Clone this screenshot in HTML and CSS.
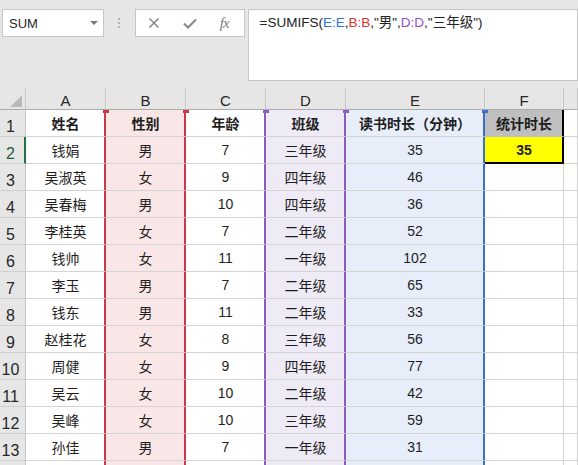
FILE: index.html
```html
<!DOCTYPE html>
<html lang="zh-CN">
<head>
<meta charset="utf-8">
<title>SUMIFS</title>
<link rel="stylesheet" href="styles.css">
</head>
<body>
<div class="topbar">
  <div class="namebox">
    <span class="nb-text">SUM</span>
    <svg class="nb-arrow" width="8" height="4" viewBox="0 0 8 4"><polygon points="0,0 8,0 4,4" fill="#7a7a7a"/></svg>
  </div>
  <div class="grip"><i></i><i></i><i></i></div>
  <div class="fbtns">
    <svg class="ic" width="12" height="12" viewBox="0 0 12 12"><path d="M1.5 1.5 L10.5 10.5 M10.5 1.5 L1.5 10.5" stroke="#8a8a8a" stroke-width="1.6" fill="none"/></svg>
    <svg class="ic" width="14" height="11" viewBox="0 0 14 11"><path d="M1 5.5 L5 9.5 L13 1.5" stroke="#8a8a8a" stroke-width="2.2" fill="none"/></svg>
    <span class="fx">fx</span>
  </div>
  <div class="fbox">=SUMIFS(<span class="rb">E:E</span>,<span class="rr">B:B</span>,"男",<span class="rp">D:D</span>,"三年级")</div>
</div>

<div class="sheet">
  <div class="corner"><svg width="12" height="12" viewBox="0 0 12 12"><polygon points="12,0 12,12 0,12" fill="#b9b9b9"/></svg></div>
  <div class="ch">A</div><div class="ch">B</div><div class="ch">C</div><div class="ch">D</div><div class="ch">E</div><div class="ch">F</div><div class="ch"></div>

  <div class="rh">1</div>
  <div class="c ca hd hr b">姓名</div><div class="c cb hd hr b">性别</div><div class="c cc hd hp b">年龄</div><div class="c cd hd hp b">班级</div><div class="c ce hd hb b">读书时长（分钟）</div><div class="c f1 b">统计时长</div><div class="c"></div>

  <div class="rh sel">2</div>
  <div class="c ca">钱娟</div><div class="c cb">男</div><div class="c cc">7</div><div class="c cd">三年级</div><div class="c ce">35</div><div class="c f2 b">35</div><div class="c"></div>

  <div class="rh">3</div>
  <div class="c ca">吴淑英</div><div class="c cb">女</div><div class="c cc">9</div><div class="c cd">四年级</div><div class="c ce">46</div><div class="c"></div><div class="c"></div>

  <div class="rh">4</div>
  <div class="c ca">吴春梅</div><div class="c cb">男</div><div class="c cc">10</div><div class="c cd">四年级</div><div class="c ce">36</div><div class="c"></div><div class="c"></div>

  <div class="rh">5</div>
  <div class="c ca">李桂英</div><div class="c cb">女</div><div class="c cc">7</div><div class="c cd">二年级</div><div class="c ce">52</div><div class="c"></div><div class="c"></div>

  <div class="rh">6</div>
  <div class="c ca">钱帅</div><div class="c cb">女</div><div class="c cc">11</div><div class="c cd">一年级</div><div class="c ce">102</div><div class="c"></div><div class="c"></div>

  <div class="rh">7</div>
  <div class="c ca">李玉</div><div class="c cb">男</div><div class="c cc">7</div><div class="c cd">二年级</div><div class="c ce">65</div><div class="c"></div><div class="c"></div>

  <div class="rh">8</div>
  <div class="c ca">钱东</div><div class="c cb">男</div><div class="c cc">11</div><div class="c cd">二年级</div><div class="c ce">33</div><div class="c"></div><div class="c"></div>

  <div class="rh">9</div>
  <div class="c ca">赵桂花</div><div class="c cb">女</div><div class="c cc">8</div><div class="c cd">三年级</div><div class="c ce">56</div><div class="c"></div><div class="c"></div>

  <div class="rh">10</div>
  <div class="c ca">周健</div><div class="c cb">女</div><div class="c cc">9</div><div class="c cd">四年级</div><div class="c ce">77</div><div class="c"></div><div class="c"></div>

  <div class="rh">11</div>
  <div class="c ca">吴云</div><div class="c cb">女</div><div class="c cc">10</div><div class="c cd">二年级</div><div class="c ce">42</div><div class="c"></div><div class="c"></div>

  <div class="rh">12</div>
  <div class="c ca">吴峰</div><div class="c cb">女</div><div class="c cc">10</div><div class="c cd">三年级</div><div class="c ce">59</div><div class="c"></div><div class="c"></div>

  <div class="rh">13</div>
  <div class="c ca">孙佳</div><div class="c cb">男</div><div class="c cc">7</div><div class="c cd">一年级</div><div class="c ce">31</div><div class="c"></div><div class="c"></div>

  <div class="rh"></div>
  <div class="c ca"></div><div class="c cb"></div><div class="c cc"></div><div class="c cd"></div><div class="c ce"></div><div class="c"></div><div class="c"></div>
</div>
</body>
</html>
```

FILE: styles.css
```css
html, body {
  margin: 0;
  padding: 0;
}
body {
  width: 578px;
  height: 465px;
  overflow: hidden;
  background: #e6e6e6;
  font-family: "Liberation Sans", "Noto Sans CJK SC", sans-serif;
  color: #1e1e1e;
}

/* ---------- formula toolbar ---------- */
.topbar {
  height: 88px;
  box-sizing: border-box;
  padding: 9px 0 0 2px;
  display: flex;
  align-items: flex-start;
}
.namebox {
  width: 102px;
  height: 28px;
  box-sizing: border-box;
  background: #fff;
  border: 1px solid #c6c6c6;
  display: flex;
  align-items: center;
  padding: 0 5px 0 6px;
}
.nb-text {
  flex: 1;
  font-family: "Liberation Sans", sans-serif;
  font-size: 13px;
  color: #262626;
}
.nb-arrow {
  display: block;
}
.grip {
  width: 31px;
  height: 28px;
  display: flex;
  flex-direction: column;
  align-items: center;
  justify-content: center;
  gap: 2px;
}
.grip i {
  display: block;
  width: 2px;
  height: 2px;
  background: #b3b3b3;
}
.fbtns {
  width: 110px;
  height: 28px;
  box-sizing: border-box;
  background: #fff;
  border: 1px solid #c6c6c6;
  display: flex;
  align-items: center;
  padding-left: 12px;
}
.fbtns .ic {
  display: block;
  margin-right: 23px;
}
.fx {
  font-family: "Liberation Serif", serif;
  font-style: italic;
  font-size: 15px;
  color: #7b7b7b;
  letter-spacing: -1px;
}
.fbox {
  margin-left: 3px;
  width: 331px;
  height: 72px;
  box-sizing: border-box;
  background: #fff;
  border: 1px solid #c6c6c6;
  padding: 3px 0 0 11px;
  font-size: 13.5px;
  line-height: 20px;
  color: #222;
  white-space: nowrap;
}
.rb { color: #2f72d6; }
.rr { color: #e0322f; }
.rp { color: #9450c8; }

/* ---------- sheet grid ---------- */
.sheet {
  display: grid;
  grid-template-columns: 26px 80px 80px 80px 80px 139px 79px 1fr;
  grid-template-rows: 22px;
  grid-auto-rows: 27px;
  background: #fff;
}
.sheet > div {
  box-sizing: border-box;
  min-width: 0;
}
.corner {
  background: #e6e6e6;
  border-right: 1px solid #c6c6c6;
  border-bottom: 1px solid #ababab;
  display: flex;
  align-items: flex-end;
  justify-content: flex-end;
  padding: 0 3px 2px 0;
}
.corner svg { display: block; }
.ch {
  background: #e6e6e6;
  border-right: 1px solid #c6c6c6;
  border-bottom: 1px solid #ababab;
  display: flex;
  align-items: center;
  justify-content: center;
  padding-top: 3px;
  font-size: 15px;
  color: #262626;
}
.rh {
  background: #e6e6e6;
  border-right: 1px solid #c6c6c6;
  border-bottom: 1px solid #cfcfcf;
  display: flex;
  align-items: flex-end;
  justify-content: center;
  padding: 0 4px 0 0;
  font-size: 16px;
  line-height: 18px;
  color: #262626;
}
.rh.sel {
  border-right: 2px solid #217346;
  padding-right: 3px;
  color: #1e5c3a;
}

.c {
  position: relative;
  border-right: 1px solid #d4d4d4;
  border-bottom: 1px solid #d4d4d4;
  display: flex;
  align-items: center;
  justify-content: center;
  font-size: 14px;
  white-space: nowrap;
}
.b { font-weight: bold; }

.ca {
  border-right-color: #c8394a;
  box-shadow: inset -1px 0 0 #c8394a;
}
.cb {
  background: #f9e6e7;
  border-right-color: #c8394a;
  box-shadow: inset -1px 0 0 #c8394a;
}
.cc {
  border-right-color: #8a5cc2;
  box-shadow: inset -1px 0 0 #8a5cc2;
}
.cd {
  background: #efebf6;
  border-right-color: #8a5cc2;
  box-shadow: inset -1px 0 0 #8a5cc2;
}
.ce {
  background: #e7eef9;
  border-right-color: #3a6fcb;
  box-shadow: inset -1px 0 0 #3a6fcb;
}

/* range handles on the top of each highlight */
.hd::after {
  content: "";
  position: absolute;
  top: 0;
  right: -4px;
  width: 6px;
  height: 3px;
  z-index: 2;
}
.hr::after { background: #c8394a; }
.hp::after { background: #8a5cc2; }
.hb::after { background: #3a6fcb; }

.f1 {
  background: #bfbfbf;
  border-right-color: #000;
  border-bottom-color: #bfbfbf;
  box-shadow: inset -1px 0 0 #000;
}
.f2 {
  background: #ffff00;
  border-right-color: #000;
  border-bottom-color: #000;
  box-shadow: inset -1px 0 0 #000, inset 0 -1px 0 #000;
}
```
